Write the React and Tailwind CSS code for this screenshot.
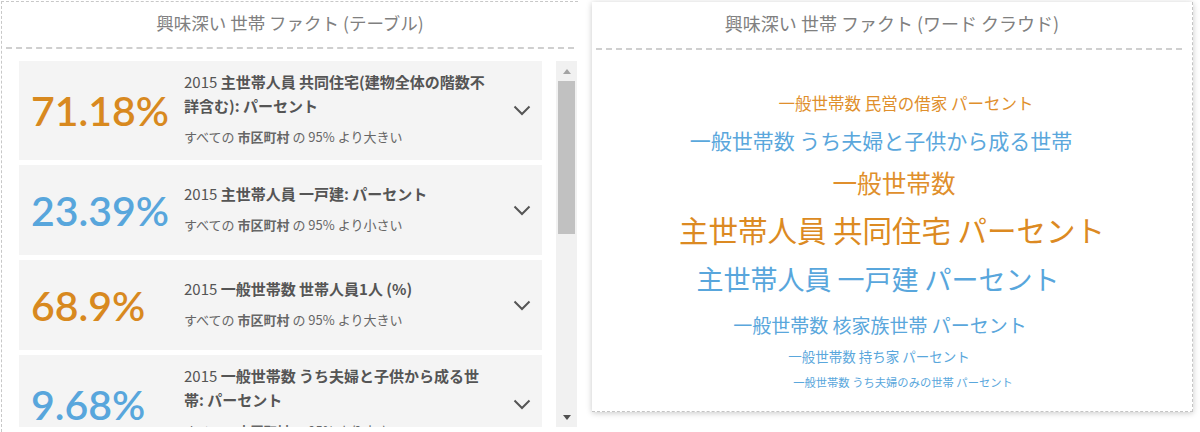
import React from "react";

const cards = [
  {
    value: "71.18%",
    color: "text-[#d8891f]",
    title: "主世帯人員 共同住宅(建物全体の階数不詳含む): パーセント",
    cmp: "より大きい",
  },
  {
    value: "23.39%",
    color: "text-[#58a6dc]",
    title: "主世帯人員 一戸建: パーセント",
    cmp: "より小さい",
  },
  {
    value: "68.9%",
    color: "text-[#d8891f]",
    title: "一般世帯数 世帯人員1人 (%)",
    cmp: "より大きい",
  },
  {
    value: "9.68%",
    color: "text-[#58a6dc]",
    title: "一般世帯数 うち夫婦と子供から成る世帯: パーセント",
    cmp: "より小さい",
  },
];

function Chevron() {
  return (
    <svg width="18" height="11" viewBox="0 0 18 11" className="shrink-0">
      <polyline
        points="1.5,1.5 9,9 16.5,1.5"
        fill="none"
        stroke="#555555"
        strokeWidth="2"
      />
    </svg>
  );
}

function Card({ c }) {
  return (
    <div className="shrink-0 min-h-[90px] py-[11px] bg-[#f4f4f4] flex items-center pl-[12px] pr-[11px]">
      <div
        className={`w-[153px] shrink-0 font-['Lato',sans-serif] font-semibold text-[41px] leading-none ${c.color}`}
      >
        {c.value}
      </div>
      <div className="flex-1 min-w-0 pr-[19px] -translate-y-[2px] font-['Noto_Sans_CJK_JP','Noto_Sans',sans-serif]">
        <div className="text-[15px] leading-[24px] text-[#555555]">
          <span>2015 </span>
          <span className="font-bold">{c.title}</span>
        </div>
        <div className="mt-[9px] text-[13px] leading-[20px] text-[#666666]">
          すべての <span className="font-bold">市区町村</span> の 95% {c.cmp}
        </div>
      </div>
      <Chevron />
    </div>
  );
}

function Scrollbar() {
  return (
    <div className="ml-[14px] w-[21px] h-full bg-[#f1f1f1] flex flex-col items-center">
      <div className="h-[20px] w-full flex items-center justify-center">
        <div className="w-0 h-0 border-l-[4px] border-r-[4px] border-b-[5px] border-l-transparent border-r-transparent border-b-[#a3a3a3]" />
      </div>
      <div className="w-[17px] h-[153px] bg-[#c1c1c1]" />
      <div className="flex-1" />
      <div className="h-[20px] w-full flex items-center justify-center">
        <div className="w-0 h-0 border-l-[4px] border-r-[4px] border-t-[5px] border-l-transparent border-r-transparent border-t-[#505050]" />
      </div>
    </div>
  );
}

const words = [
  { t: "一般世帯数 民営の借家 パーセント", cls: "text-[16.5px] h-[26px] leading-[26px] text-[#e08f2c] translate-x-[14px]", mt: "mt-0" },
  { t: "一般世帯数 うち夫婦と子供から成る世帯", cls: "text-[21px] h-[30px] leading-[30px] text-[#5aa7dc] -translate-x-[11px]", mt: "mt-[9px]" },
  { t: "一般世帯数", cls: "text-[24.6px] h-[34px] leading-[34px] text-[#e08f2c] translate-x-[2px]", mt: "mt-[10px]" },
  { t: "主世帯人員 共同住宅 パーセント", cls: "text-[29.5px] h-[40px] leading-[40px] text-[#dc8a22]", mt: "mt-[10px]" },
  { t: "主世帯人員 一戸建 パーセント", cls: "text-[27px] h-[38px] leading-[38px] text-[#58a6dc] -translate-x-[14px]", mt: "mt-[11px]" },
  { t: "一般世帯数 核家族世帯 パーセント", cls: "text-[19px] h-[28px] leading-[28px] text-[#5aa7dc] -translate-x-[12px]", mt: "mt-[13px]" },
  { t: "一般世帯数 持ち家 パーセント", cls: "text-[13.5px] h-[22px] leading-[22px] text-[#5aa7dc] -translate-x-[13px]", mt: "mt-[6px]" },
  { t: "一般世帯数 うち夫婦のみの世帯 パーセント", cls: "text-[11.3px] h-[18px] leading-[18px] text-[#5aa7dc] translate-x-[11px]", mt: "mt-[6px]" },
];

export default function App() {
  return (
    <div className="w-[1200px] h-[432px] bg-white flex overflow-hidden font-['Noto_Sans_CJK_JP','Noto_Sans',sans-serif]">
      {/* Left panel */}
      <div className="w-[577px] ml-[1px] mt-[1px] h-[431px] border-t border-l border-dashed border-[#c8c8c8] flex flex-col">
        <div className="h-[45px] flex items-center justify-center text-[17.5px] text-[#808080] pb-[2px]">
          興味深い 世帯 ファクト (テーブル)
        </div>
        <div className="mx-[4px] border-t-2 border-dashed border-[#cfcfcf]" />
        <div className="mt-[12px] ml-[17px] h-[366px] flex">
          <div className="w-[523px] h-full overflow-hidden flex flex-col gap-[5px]">
            {cards.map((c, i) => (
              <Card key={i} c={c} />
            ))}
          </div>
          <Scrollbar />
        </div>
      </div>

      {/* Right panel */}
      <div className="ml-[14px] mt-[2px] w-[601px] h-[410px] bg-white border-r border-b border-dashed border-[#c4c4c4] shadow-[0_1px_6px_rgba(0,0,0,0.22)] flex flex-col">
        <div className="h-[46px] flex items-center justify-center text-[18px] text-[#808080] pb-[4px]">
          興味深い 世帯 ファクト (ワード クラウド)
        </div>
        <div className="ml-[4px] mr-[10px] border-t-2 border-dashed border-[#cfcfcf]" />
        <div className="pt-[40px] flex flex-col items-center">
          {words.map((w, i) => (
            <div key={i} className={`whitespace-nowrap ${w.mt} ${w.cls}`}>
              {w.t}
            </div>
          ))}
        </div>
      </div>
    </div>
  );
}
